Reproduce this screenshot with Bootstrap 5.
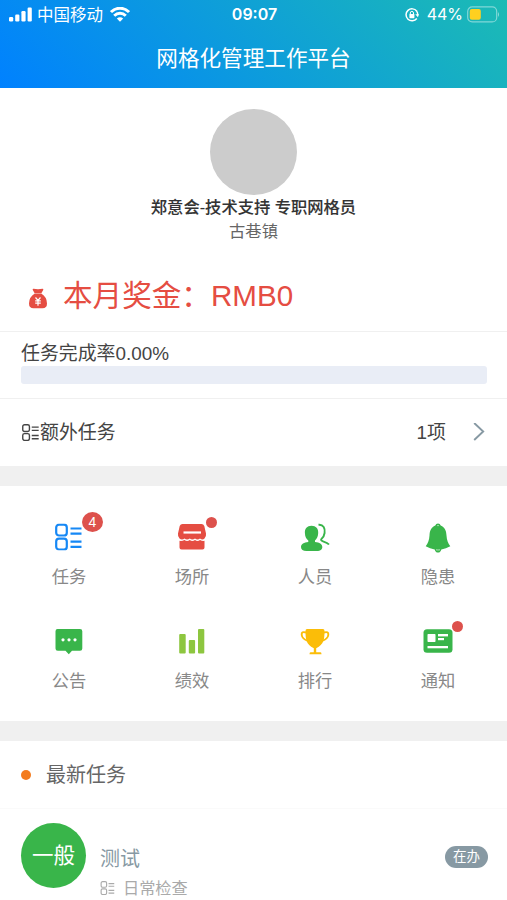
<!DOCTYPE html>
<html lang="zh-CN">
<head>
<meta charset="utf-8">
<meta name="viewport" content="width=device-width, initial-scale=1">
<title>网格化管理工作平台</title>
<link href="https://cdn.jsdelivr.net/npm/bootstrap@5.3.0/dist/css/bootstrap.min.css" rel="stylesheet">
<style>
body{font-family:"Liberation Sans","Noto Sans CJK SC",sans-serif;color:#444;background:#fff;height:900px;overflow:hidden}
svg{display:block;flex:none}
.top-bar{height:88px;background:linear-gradient(45deg,#0081ff,#1cbbb4)}
.status{height:29px;padding:0 7px 0 9px;font-size:16.5px;line-height:29px}
.status .side{flex:1 1 0}
.status .latin{font-family:Inter,sans-serif;font-size:16px}
.carrier{padding-top:2px;margin-left:4px}
.clock{font-weight:600}
.app-title{font-size:21.6px;line-height:58px;height:59px;padding-top:1px}
.profile{height:173px;padding-top:21px;font-size:16.3px;line-height:24px}
.avatar{width:87px;height:86px;background:#ccc}
.person{font-weight:500;-webkit-text-stroke:.1px #333;color:#333;line-height:24px}
.town{color:#666}
.bonus{height:70px;padding:0 28px;color:#e54d42;font-size:29.6px;line-height:70px}
.bonus-text{padding-left:15px}
.line-top{border-top:1px solid #f0f0f0}
.rate{height:67px;padding:9px 20px 0 21px;font-size:18.9px;line-height:25px}
.progress.rate-bar{height:18px;border-radius:3px;background:#e9edf6}
.extra{height:68px;padding:0 22px;font-size:18.9px}
.extra span{padding-top:2px}
.gap-band{height:20px;background:#f0f0f0}
.menu{height:235px;padding:0 7.5px}
.menu .cell{height:104px;padding-top:34px;color:#888;font-size:17.3px;line-height:26px}
.ico{width:34px;height:34px;margin-bottom:10px}
.dot{position:absolute;width:11px;height:11px;left:31px;top:-3px;background:#dd514c}
.count{position:absolute;left:30px;top:-8px;width:21px;height:20px;line-height:20px;font-size:14px;background:#dd514c;color:#fff;text-align:center}
.news-head{height:67px;padding-left:21px;font-size:20px;color:#666}
.orange{width:10px;height:10px;background:#f37b1d;margin-right:15px}
.item{padding:14px 19px 0 21px;border-top:1px solid #fafafa}
.level{width:65px;height:65px;background:#39b54a;font-size:21.5px;padding-top:2px}
.item-body{padding:21px 0 0 14px}
.item-title{font-size:20px;line-height:30px;color:#8799a3}
.kind{font-size:16.2px;line-height:24px;padding-top:2px;color:#aaa}
.state{width:43px;height:22px;background:#8799a3;font-size:13.5px;margin-top:23px;padding-top:1px}
</style>
<script src="https://cdn.jsdelivr.net/npm/bootstrap@5.3.0/dist/js/bootstrap.bundle.min.js"></script>
</head>
<body>
<svg width="0" height="0" class="position-absolute"><defs>
<symbol id="list" viewBox="0 0 27 27"><g fill="none" stroke="currentColor" stroke-width="2.2"><rect x="1.2" y="1.2" width="10.6" height="10.8" rx="2.8"/><rect x="1.2" y="15.2" width="10.6" height="10.8" rx="2.8"/><path d="M15.5 5H26.500M15.500 10.200H26.500M15.500 18.200H26.500M15.500 23.400H26.500"/></g></symbol>
</defs></svg>

<header class="top-bar text-white">
  <div class="status d-flex align-items-center">
    <div class="side d-flex align-items-center">
      <svg width="24" height="16" viewBox="0 0 24 16" fill="#fff"><rect x="0" y="10" width="4.200" height="4.500" rx="1.200"/><rect x="6.200" y="7.500" width="4.200" height="7" rx="1.200"/><rect x="12.400" y="4" width="4.200" height="10.500" rx="1.200"/><rect x="18.600" y=".5" width="4.200" height="14" rx="1.200"/></svg>
      <span class="carrier">中国移动</span>
      <svg style="margin-left:7px" width="20" height="15" viewBox="0 0 20 15" fill="none" stroke="#fff" stroke-width="2.900"><path d="M1 5.100C6-.1 14-.1 19 5.100M4.200 8.800C7.500 5.400 12.500 5.400 15.800 8.800"/><path d="M10 14.700 6.800 11.500Q10 8.800 13.200 11.500Z" fill="#fff" stroke="none"/></svg>
    </div>
    <span class="latin clock">09:07</span>
    <div class="side d-flex align-items-center justify-content-end">
      <svg width="14" height="14" viewBox="0 0 14 14" fill="none" stroke="#fff"><path d="M11.800 3.200A6 6 0 1 0 11.800 10.500" stroke-width="1.500"/><path d="M10.300 6.200H14L12.900 9.300Z" fill="#fff" stroke="none"/><path d="M12.800 7Q12.800 4.500 11.500 3" stroke-width="1.400"/><rect x="4.400" y="6" width="5" height="4.200" rx=".6" fill="#fff" stroke="none"/><path d="M5.300 6V5a1.600 1.600 0 0 1 3.200 0V6" stroke-width="1"/></svg>
      <span class="latin mx-1 ps-1">44%</span>
      <svg width="33" height="17" viewBox="0 0 33 17"><rect x=".7" y=".9" width="29" height="15" rx="4.500" fill="none" stroke="#fff" stroke-opacity=".45" stroke-width="1.200"/><rect x="2.800" y="3" width="11" height="10.800" rx="2" fill="#ffd020"/><path d="M31 6q2 2.500 0 5Z" fill="#fff" opacity=".5"/></svg>
    </div>
  </div>
  <h1 class="app-title text-center fw-normal mb-0">网格化管理工作平台</h1>
</header>

<section class="profile text-center">
  <div class="avatar rounded-circle mx-auto"></div>
  <div class="person">郑意会-技术支持 专职网格员</div>
  <div class="town">古巷镇</div>
</section>

<div class="bonus d-flex align-items-center">
  <svg class="mt-1" width="20" height="21" viewBox="0 0 20 21"><path fill="#e54d42" d="M5.500.7Q10 1.600 14.500.7Q15.800.7 15.200 2L13.200 5.500Q19 9 19 15.500Q19 20.300 14.500 20.300H5.500Q1 20.300 1 15.500Q1 9 6.800 5.500L4.800 2Q4.200.7 5.500.7Z"/><path d="M6.500 5.600H13.500" stroke="#fff" stroke-width=".7" opacity=".7"/><path fill="none" stroke="#fff" stroke-width="1.200" d="M7.500 9.500 10 12.400 12.500 9.500M10 12.400V17.800M7.200 12.800H12.800M7.200 15.200H12.800"/></svg>
  <span class="bonus-text text-nowrap">本月奖金：RMB0</span>
</div>

<section class="rate line-top">
  <div>任务完成率0.00%</div>
  <div class="progress rate-bar"><div class="progress-bar" style="width:0%"></div></div>
</section>

<div class="extra line-top d-flex align-items-center">
  <svg width="18" height="17" viewBox="0 0 18 17"><use href="#list" width="17" height="17"/></svg>
  <span>额外任务</span>
  <span class="ms-auto">1项</span>
  <svg style="margin-left:27px" width="12" height="20" viewBox="0 0 12 20" fill="none" stroke="#8799a3" stroke-width="1.900"><path d="M1.200 0 10.200 8.500 1.200 17"/></svg>
</div>
<div class="gap-band"></div>

<nav class="menu">
  <div class="row g-0 text-center">
    <div class="col-3 cell"><div class="ico position-relative mx-auto">
      <svg width="34" height="34" viewBox="0 0 34 34" color="#1688f5"><use href="#list" x="3" y="3.500" width="27" height="27"/></svg>
      <span class="count rounded-circle">4</span></div>任务</div>
    <div class="col-3 cell"><div class="ico position-relative mx-auto">
      <svg width="34" height="34" viewBox="0 0 34 34" fill="#e54d42"><path d="M7.500 4H26.500Q28.500 4 29.300 6L31 13.500Q31.500 16 29.500 18.500Q27.500 20.300 25 18.500Q22.500 20.500 20 18.500Q17.300 20.500 14.800 18.500Q12 20.500 9.500 18.500Q7 20.300 4.500 18.500Q2.500 16 3 13.500L4.700 6Q5.500 4 7.500 4Z"/><path d="M4.500 20.800Q7 21.300 9.500 20Q12 22 14.800 20Q17.300 22 20 20Q22.500 22 25 20Q27.500 21.300 29.500 20.800V27.500Q29.500 29.500 27.500 29.500H6.500Q4.500 29.500 4.500 27.500Z"/><path d="M8.500 12.500H26" stroke="#fff" stroke-width="2.200"/></svg>
      <span class="dot rounded-circle"></span></div>场所</div>
    <div class="col-3 cell"><div class="ico mx-auto">
      <svg width="34" height="34" viewBox="0 0 34 34" fill="#39b54a"><path d="M13.500 5.800C18 5.800 20.500 8.700 20.200 13C20 17 18.500 19 17 20.500V22C21.500 22.500 24.300 24 24.300 27C24.300 29.700 22 31 19 31H8.500C5 31 3 29.800 3 27C3 24 6 22.500 10.300 22V20.500C8.500 19 7 17 6.900 13C6.700 8.700 9 5.800 13.500 5.800Z"/><path d="M20.500 4.800C25.500 4.300 27.300 8.500 26.600 13C26.200 16 24.700 18 23.400 19C22.600 20 23.200 20.700 25 21.300C28.500 22.500 29.800 23 31 24.500" fill="none" stroke="#39b54a" stroke-width="1.900"/></svg>
      </div>人员</div>
    <div class="col-3 cell"><div class="ico mx-auto">
      <svg width="34" height="34" viewBox="0 0 34 34" fill="#39b54a"><path d="M14.300 5.500A2.800 2.800 0 0 1 19.700 5.500C24 7.500 25.200 10.500 25.500 15.500C25.800 20.500 27 23 29.300 26.200Q25 28.600 20.300 29.400Q19.600 32.500 17 32.500Q14.400 32.500 13.700 29.400Q9 28.600 4.700 26.200C7 23 8.200 20.500 8.500 15.500C8.800 10.500 10 7.500 14.300 5.500Z"/><circle cx="17" cy="5.600" r=".6" fill="#fff"/><path d="M15 29.800Q17 30.200 19 29.800" stroke="#fff" stroke-width=".6" fill="none"/></svg>
      </div>隐患</div>
    <div class="col-3 cell"><div class="ico mx-auto">
      <svg width="34" height="34" viewBox="0 0 34 34" fill="#39b54a"><path d="M5.500 5H28Q30.300 5 30.300 7.300V24.500Q30.300 26.800 28 26.800H20L16.800 30.300 13.500 26.800H5.800Q3.500 26.800 3.500 24.500V7.300Q3.500 5 5.500 5Z"/><g fill="#fff"><circle cx="11" cy="15.800" r="1.600"/><circle cx="17" cy="15.800" r="1.600"/><circle cx="23" cy="15.800" r="1.600"/></g></svg>
      </div>公告</div>
    <div class="col-3 cell"><div class="ico mx-auto">
      <svg width="34" height="34" viewBox="0 0 34 34" fill="#8dc63f"><rect x="4.200" y="10" width="6.500" height="19.500" rx="1"/><rect x="13.800" y="16" width="6.300" height="13.500" rx="1"/><rect x="23" y="5" width="6.300" height="24.500" rx="1"/></svg>
      </div>绩效</div>
    <div class="col-3 cell"><div class="ico mx-auto">
      <svg width="34" height="34" viewBox="0 0 34 34" fill="#fbbd08"><path d="M9 5H25Q26.500 5 26.500 7C26.500 15 26 20.500 18.200 24.300V28.300H22.500Q23.500 28.300 23.500 30.300H11.500Q11.500 28.300 12.500 28.300H15.800V24.300C8 20.500 7.500 15 7.500 7Q7.500 5 9 5Z"/><path d="M8 8.500Q3.200 7 3.700 11C4.200 14.500 7 16 10 16.800M26 8.500Q30.800 7 30.300 11C29.800 14.500 27 16 24 16.800" fill="none" stroke="#fbbd08" stroke-width="1.900"/></svg>
      </div>排行</div>
    <div class="col-3 cell"><div class="ico position-relative mx-auto">
      <svg width="34" height="34" viewBox="0 0 34 34"><rect x="2.500" y="5.300" width="29" height="23.500" rx="3.500" fill="#39b54a"/><g fill="#fff"><rect x="6.500" y="10" width="8" height="8" rx=".7"/><rect x="17" y="10" width="10" height="2.400"/><rect x="17" y="14" width="6" height="2.200"/><rect x="6.500" y="22" width="20.500" height="2.300"/></g></svg>
      <span class="dot rounded-circle"></span></div>通知</div>
  </div>
</nav>
<div class="gap-band"></div>

<div class="news-head d-flex align-items-center"><span class="orange rounded-circle"></span>最新任务</div>
<article class="item d-flex">
  <div class="level rounded-circle d-flex align-items-center justify-content-center text-white flex-shrink-0">一般</div>
  <div class="item-body flex-grow-1">
    <div class="item-title">测试</div>
    <div class="kind d-flex align-items-center"><svg width="15" height="14"><use href="#list"/></svg><span class="ms-2">日常检查</span></div>
  </div>
  <span class="state rounded-pill text-white d-flex align-items-center justify-content-center">在办</span>
</article>
</body>
</html>
